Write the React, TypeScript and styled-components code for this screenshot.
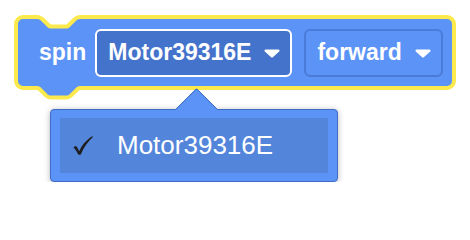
import React from 'react';
import styled, { createGlobalStyle } from 'styled-components';

const BLUE = '#5c93f6';
const DARK_BLUE = '#4473cc';
const YELLOW = '#fbe94d';

const GlobalStyle = createGlobalStyle`
  html, body {
    margin: 0;
    padding: 0;
    background: #ffffff;
    overflow: hidden;
  }
  body {
    font-family: 'Liberation Sans', Arial, sans-serif;
  }
`;

const Stage = styled.div`
  padding: 15px 0 0 14px;
  display: flex;
  flex-direction: column;
  align-items: flex-start;
`;

const Block = styled.div`
  position: relative;
  box-sizing: border-box;
  height: 75px;
  display: flex;
  align-items: center;
  gap: 9px;
  padding: 0 9px 0 21px;
  background: ${BLUE};
  border: 4px solid ${YELLOW};
  border-radius: 9px;
`;

const Notch = styled.svg`
  position: absolute;
  left: 10px;
  top: -4px;
`;

const Tab = styled.svg`
  position: absolute;
  left: 10px;
  bottom: -14px;
`;

const Label = styled.span`
  color: #ffffff;
  font-size: 23px;
  font-weight: bold;
  position: relative;
`;

const Fields = styled.div`
  display: flex;
  align-items: center;
  gap: 12px;
`;

const Field = styled.div<{ $open?: boolean }>`
  box-sizing: border-box;
  height: 48px;
  display: flex;
  align-items: center;
  gap: 13px;
  padding: 0 10px 0 11px;
  border-radius: 6px;
  border: 2px solid ${p => (p.$open ? '#ffffff' : '#4a7bd8')};
  background: ${p => (p.$open ? DARK_BLUE : BLUE)};
  color: #ffffff;
  font-size: 23px;
  font-weight: bold;
`;

const Caret = styled.svg`
  display: block;
  margin-top: 1px;
`;

const Menu = styled.div`
  position: relative;
  box-sizing: border-box;
  width: 288px;
  margin: 19px 0 0 36px;
  padding: 8px 9px;
  background: ${BLUE};
  border: 1px solid #3f6dc6;
  border-radius: 4px;
  box-shadow: 0 1px 6px rgba(0, 0, 0, 0.28);

  &::before {
    content: '';
    position: absolute;
    box-sizing: border-box;
    width: 31px;
    height: 31px;
    left: 129.5px;
    top: -16px;
    background: ${BLUE};
    border-top: 1px solid #3f6dc6;
    border-left: 1px solid #3f6dc6;
    border-top-left-radius: 3px;
    transform: rotate(45deg);
  }
`;

const MenuItem = styled.div`
  position: relative;
  z-index: 1;
  height: 55px;
  display: flex;
  align-items: center;
  background: #5385db;
  color: #ffffff;
  font-size: 26px;
`;

const Check = styled.svg`
  display: block;
  margin: 0 24px 0 13px;
`;

const CaretIcon = () => (
  <Caret width="16" height="9" viewBox="0 0 16 9">
    <path
      d="M1.6 0.6 H14.4 A1.1 1.1 0 0 1 15.2 2.5 L8.8 8.2 A1.2 1.2 0 0 1 7.2 8.2 L0.8 2.5 A1.1 1.1 0 0 1 1.6 0.6 Z"
      fill="#ffffff"
    />
  </Caret>
);

const CheckIcon = () => (
  <Check width="20" height="19" viewBox="0 0 20 19">
    <path
      d="M0.4 11.6 C1.2 10.8 2.2 10.2 3.1 10.1 C4.2 11.4 5.2 13.4 6.2 15.2 C8.8 9.2 13.4 3.6 19.4 0.2 L20 1 C14.6 5.6 10.6 11.6 7.8 18.6 C7.1 18.8 6.2 18.9 5.4 18.8 C4.1 16.2 2.4 13.4 0.4 11.6 Z"
      fill="#1e1e1e"
    />
  </Check>
);

const notchTop =
  'M5 0 H19 c2.4 0 3.6 1.2 4.8 2.4 l4.8 4.8 c1.2 1.2 2.4 2.4 4.8 2.4 h14.4 c2.4 0 3.6 -1.2 4.8 -2.4 l4.8 -4.8 c1.2 -1.2 2.4 -2.4 4.8 -2.4 H80 V30 H5 Z';
const tabBottom =
  'M5 -10 H80 V0 H62.2 c-2.4 0 -3.6 1.2 -4.8 2.4 l-4.8 4.8 c-1.2 1.2 -2.4 2.4 -4.8 2.4 h-14.4 c-2.4 0 -3.6 -1.2 -4.8 -2.4 l-4.8 -4.8 c-1.2 -1.2 -2.4 -2.4 -4.8 -2.4 H5 Z';

const App: React.FC = () => {
  return (
    <Stage>
      <GlobalStyle />
      <Block>
        <Notch width="62" height="18" viewBox="10 -4 62 18">
          <rect x="10" y="-4" width="62" height="18" fill="#ffffff" />
          <path d={notchTop} fill={BLUE} stroke={YELLOW} strokeWidth="8" strokeLinejoin="round" paintOrder="stroke" />
        </Notch>
        <Tab width="62" height="20" viewBox="10 -6 62 20">
          <path d={tabBottom} fill={BLUE} stroke={YELLOW} strokeWidth="8" strokeLinejoin="round" paintOrder="stroke" />
        </Tab>
        <Label>spin</Label>
        <Fields>
          <Field $open>
            <span>Motor39316E</span>
            <CaretIcon />
          </Field>
          <Field>
            <span>forward</span>
            <CaretIcon />
          </Field>
        </Fields>
      </Block>
      <Menu>
        <MenuItem>
          <CheckIcon />
          <span>Motor39316E</span>
        </MenuItem>
      </Menu>
    </Stage>
  );
};

export default App;
